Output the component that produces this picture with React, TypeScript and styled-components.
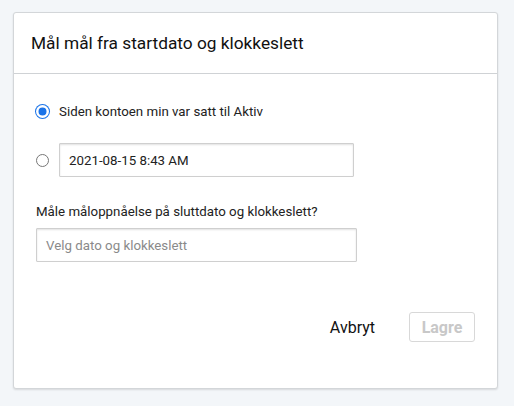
import React, { useState } from "react";
import styled, { createGlobalStyle } from "styled-components";

const GlobalStyle = createGlobalStyle`
  html, body {
    margin: 0;
    padding: 0;
    background: #f3f6f9;
    font-family: Roboto, "Liberation Sans", Arial, sans-serif;
  }
  * { box-sizing: border-box; }
`;

const Page = styled.div`
  width: 514px;
  height: 406px;
  padding: 12px 16px 17px 13px;
`;

const Dialog = styled.div`
  height: 100%;
  background: #fff;
  border: 1px solid #d3d6d9;
  border-radius: 3px;
  box-shadow: 0 1px 2px rgba(0, 0, 0, 0.12);
  display: flex;
  flex-direction: column;
`;

const Header = styled.div`
  height: 61px;
  padding: 0 17px;
  display: flex;
  align-items: center;
  border-bottom: 1px solid #cfd2d5;
`;

const Title = styled.h2`
  margin: 0;
  font-size: 17.3px;
  font-weight: 400;
  color: #111;
`;

const Body = styled.div`
  padding: 30px 22px 0 22px;
  display: flex;
  flex-direction: column;
`;

const Option = styled.label<{ $gap?: number }>`
  display: flex;
  align-items: center;
  gap: 10px;
  margin-bottom: ${(p) => p.$gap ?? 0}px;
  font-size: 13.3px;
  color: #222;
`;

const Radio = styled.span<{ $checked?: boolean }>`
  width: 13px;
  height: 13px;
  border-radius: 50%;
  flex: none;
  border: ${(p) => (p.$checked ? "none" : "1px solid #777")};
  background: ${(p) => (p.$checked ? "#1a73e8" : "#fff")};
  box-shadow: ${(p) => (p.$checked ? "inset 0 0 0 2.5px #fff, 0 0 0 1px #1a73e8" : "none")};
`;

const Field = styled.div<{ $width: number; $placeholder?: boolean }>`
  width: ${(p) => p.$width}px;
  height: 34px;
  padding: 0 9px;
  display: flex;
  align-items: center;
  border: 1px solid #cfcfcf;
  border-radius: 1px;
  box-shadow: inset 0 1px 2px rgba(0, 0, 0, 0.12);
  font-size: 13.3px;
  color: ${(p) => (p.$placeholder ? "#8a8a8a" : "#222")};
`;

const Label = styled.div`
  margin-top: 27px;
  margin-bottom: 9px;
  font-size: 13.3px;
  color: #222;
`;

const Footer = styled.div`
  margin-top: 50px;
  display: flex;
  justify-content: flex-end;
  align-items: center;
  gap: 34px;
`;

const TextButton = styled.button`
  border: none;
  background: none;
  padding: 0;
  font-family: inherit;
  font-size: 16px;
  color: #111;
  cursor: pointer;
`;

const SaveButton = styled.button`
  width: 66px;
  height: 30px;
  border: 1px solid #d8d8d8;
  border-radius: 3px;
  background: #fff;
  font-family: inherit;
  font-size: 16px;
  font-weight: 700;
  color: #c8c8c8;
`;

export default function App() {
  const [choice, setChoice] = useState(0);
  return (
    <>
      <GlobalStyle />
      <Page>
        <Dialog>
          <Header>
            <Title>Mål mål fra startdato og klokkeslett</Title>
          </Header>
          <Body>
            <Option $gap={24} onClick={() => setChoice(0)}>
              <Radio $checked={choice === 0} />
              Siden kontoen min var satt til Aktiv
            </Option>
            <Option onClick={() => setChoice(1)}>
              <Radio $checked={choice === 1} />
              <Field $width={295}>2021-08-15 8:43 AM</Field>
            </Option>
            <Label>Måle måloppnåelse på sluttdato og klokkeslett?</Label>
            <Field $width={321} $placeholder>
              Velg dato og klokkeslett
            </Field>
            <Footer>
              <TextButton>Avbryt</TextButton>
              <SaveButton disabled>Lagre</SaveButton>
            </Footer>
          </Body>
        </Dialog>
      </Page>
    </>
  );
}
